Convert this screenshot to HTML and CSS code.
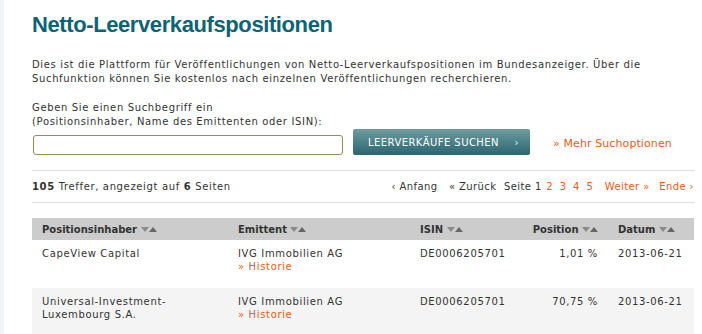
FILE: index.html
```html
<!DOCTYPE html>
<html lang="de">
<head>
    <meta charset="UTF-8">
    <title>Netto-Leerverkaufspositionen</title>
    <link rel="stylesheet" href="styles.css">
</head>
<body>
    <div class="page">
        <h1>Netto-Leerverkaufspositionen</h1>
        <p class="intro">Dies ist die Plattform für Veröffentlichungen von Netto-Leerverkaufspositionen im Bundesanzeiger. Über die Suchfunktion können Sie kostenlos nach einzelnen Veröffentlichungen recherchieren.</p>

        <form class="search" onsubmit="return false">
            <label for="q">Geben Sie einen Suchbegriff ein<br>(Positionsinhaber, Name des Emittenten oder ISIN):</label>
            <div class="search-row">
                <input type="text" id="q">
                <button type="submit"><span>LEERVERKÄUFE SUCHEN</span><span class="chev">›</span></button>
                <a href="#" class="more">» Mehr Suchoptionen</a>
            </div>
        </form>

        <div class="result-bar">
            <span><b>105</b> Treffer, angezeigt auf <b>6</b> Seiten</span>
            <span class="pager">
                <span class="nav">‹ Anfang</span>
                <span class="nav">« Zurück</span>
                <span class="page-no">Seite 1</span>
                <a href="#" class="first">2</a>
                <a href="#">3</a>
                <a href="#">4</a>
                <a href="#">5</a>
                <a href="#" class="wide">Weiter »</a>
                <a href="#" class="last">Ende ›</a>
            </span>
        </div>

        <table class="results">
            <thead>
                <tr>
                    <th class="c-holder">Positionsinhaber <svg class="sort" width="16" height="7" viewBox="0 0 16 7"><path d="M0 1h8l-4 5z" fill="#8a8a8a"/><path d="M8 6h8l-4-5z" fill="#666"/></svg></th>
                    <th class="c-issuer">Emittent <svg class="sort" width="16" height="7" viewBox="0 0 16 7"><path d="M0 1h8l-4 5z" fill="#8a8a8a"/><path d="M8 6h8l-4-5z" fill="#666"/></svg></th>
                    <th class="c-isin">ISIN <svg class="sort" width="16" height="7" viewBox="0 0 16 7"><path d="M0 1h8l-4 5z" fill="#8a8a8a"/><path d="M8 6h8l-4-5z" fill="#666"/></svg></th>
                    <th class="c-pos">Position <svg class="sort" width="16" height="7" viewBox="0 0 16 7"><path d="M0 1h8l-4 5z" fill="#8a8a8a"/><path d="M8 6h8l-4-5z" fill="#666"/></svg></th>
                    <th class="c-date">Datum <svg class="sort" width="16" height="7" viewBox="0 0 16 7"><path d="M0 1h8l-4 5z" fill="#8a8a8a"/><path d="M8 6h8l-4-5z" fill="#666"/></svg></th>
                </tr>
            </thead>
            <tbody>
                <tr>
                    <td>CapeView Capital</td>
                    <td>IVG Immobilien AG<br><a href="#">» Historie</a></td>
                    <td>DE0006205701</td>
                    <td class="num">1,01 %</td>
                    <td>2013-06-21</td>
                </tr>
                <tr class="alt">
                    <td>Universal-Investment-<br>Luxembourg S.A.</td>
                    <td>IVG Immobilien AG<br><a href="#">» Historie</a></td>
                    <td>DE0006205701</td>
                    <td class="num">70,75 %</td>
                    <td>2013-06-21</td>
                </tr>
            </tbody>
        </table>
    </div>
</body>
</html>
```

FILE: styles.css
```css
body {
    margin: 0;
    font-family: 'DejaVu Sans', Verdana, sans-serif;
    font-size: 10px;
    letter-spacing: 0.65px;
    color: #333;
    background: #fff;
    border-left: 4px solid #f0f3f6;
}
.page {
    padding: 0 8px 0 28px;
}
h1 {
    font-family: 'Liberation Sans', Arial, sans-serif;
    font-size: 22px;
    letter-spacing: -0.4px;
    color: #0a6478;
    margin: 0;
    padding-top: 12px;
    line-height: 26px;
}
.intro {
    margin: 20px 0 0;
    line-height: 14px;
}
.search {
    margin-top: 15px;
}
.search label {
    display: block;
    line-height: 14px;
}
.search-row {
    display: flex;
    align-items: flex-end;
}
.search-row input {
    width: 310px;
    height: 20px;
    box-sizing: border-box;
    border: 1px solid #9c8a55;
    border-radius: 3px;
    margin: 0 0 0 1px;
    padding: 0 4px;
}
.search-row button {
    margin-left: 10px;
    width: 177px;
    height: 26px;
    border: none;
    border-radius: 2px;
    background: linear-gradient(#6e9ba0, #2a6670);
    color: #fff;
    font-family: inherit;
    font-size: 10px;
    letter-spacing: 0.45px;
    display: flex;
    justify-content: space-between;
    align-items: center;
    padding: 0 11px 0 15px;
    cursor: pointer;
}
.search-row .chev {
    opacity: 0.8;
    font-size: 11px;
}
a {
    color: #f05a14;
    text-decoration: none;
}
.more {
    font-size: 11px;
    letter-spacing: 0.1px;
    margin: 0 0 5px 23px;
}
.result-bar {
    margin-top: 15px;
    border-top: 1px solid #ddd;
    border-bottom: 1px solid #ddd;
    display: flex;
    justify-content: space-between;
    align-items: center;
    height: 31px;
}
.pager {
    letter-spacing: 0.4px;
}
.pager span,
.pager a {
    margin-left: 3px;
}
.pager .nav,
.pager .wide {
    margin-left: 8px;
}
.pager .page-no {
    margin-left: 4px;
}
.pager .first {
    margin-left: 1px;
}
.pager .last {
    margin-left: 6px;
}
.results {
    width: 100%;
    border-collapse: collapse;
    table-layout: fixed;
    margin-top: 15px;
}
.results th {
    background: #ccc;
    text-align: left;
    font-weight: bold;
    letter-spacing: 0;
    height: 22px;
    padding: 0 0 0 10px;
    white-space: nowrap;
}
.results td {
    vertical-align: top;
    padding: 7px 0 0 10px;
    height: 41px;
    line-height: 13px;
}
.results tr.alt td {
    background: #f4f4f4;
}
.results .sort {
    vertical-align: 0;
}
.c-holder { width: 186px; }
.c-issuer { width: 172px; }
.c-isin { width: 90px; }
.results th.c-pos {
    width: 78px;
    text-align: right;
    padding-right: 10px;
}
.c-date { width: 76px; }
.results td.num {
    text-align: right;
    padding-right: 10px;
}
```
